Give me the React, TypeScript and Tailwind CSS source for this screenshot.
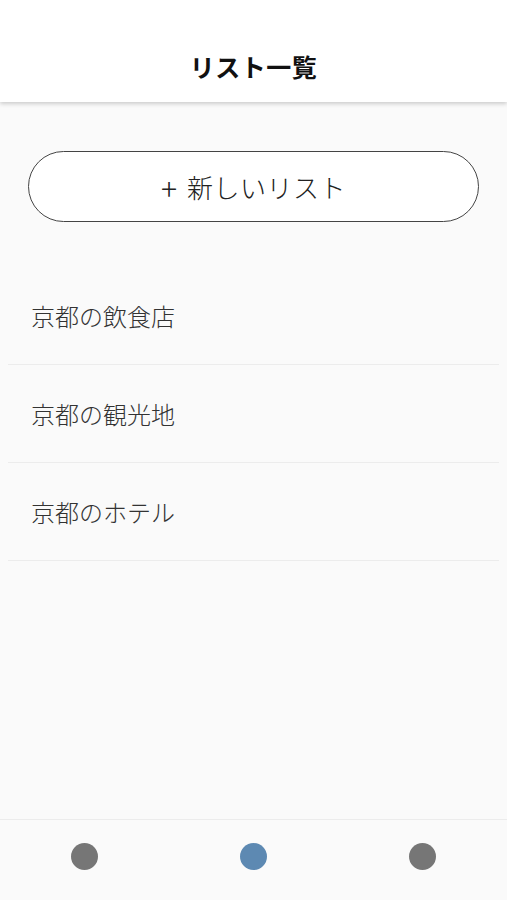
const LISTS = ['京都の飲食店', '京都の観光地', '京都のホテル']

const font = { fontFamily: '"Noto Sans CJK JP", "Noto Sans", sans-serif' }

export default function App() {
  return (
    <div className="flex h-[900px] w-full flex-col bg-[#fafafa]" style={font}>
      {/* Header */}
      <header className="relative z-10 flex h-[102px] shrink-0 items-end justify-center bg-white pb-[23px] shadow-[0_2px_4px_rgba(0,0,0,0.18)]">
        <h1 className="text-[25px] font-bold leading-none tracking-[0.5px] text-[#111]">リスト一覧</h1>
      </header>

      <main className="flex-1">
        <div className="px-[28px] pt-[49px]">
          <button className="flex h-[71px] w-full items-center justify-center gap-[10px] rounded-full border border-[#444] bg-white text-[26px] font-light text-[#222]">
            <span className="text-[30px] font-extralight leading-none">+</span>
            <span className="leading-none tracking-[0.5px]">新しいリスト</span>
          </button>
        </div>

        <ul className="mt-[45px]">
          {LISTS.map((name) => (
            <li
              key={name}
              className="mx-[8px] flex h-[98px] items-center border-b border-[#ececec] pl-[23px] text-[24px] font-light text-[#333]"
            >
              {name}
            </li>
          ))}
        </ul>
      </main>

      {/* Bottom nav */}
      <nav className="grid h-[81px] shrink-0 grid-cols-3 border-t border-[#ececec] bg-[#fafafa] pb-[8px]">
        <div className="flex items-center justify-center">
          <span className="h-[27px] w-[27px] rounded-full bg-[#767676]" />
        </div>
        <div className="flex items-center justify-center">
          <span className="h-[27px] w-[27px] rounded-full bg-[#5d89b2]" />
        </div>
        <div className="flex items-center justify-center">
          <span className="h-[27px] w-[27px] rounded-full bg-[#767676]" />
        </div>
      </nav>
    </div>
  )
}
